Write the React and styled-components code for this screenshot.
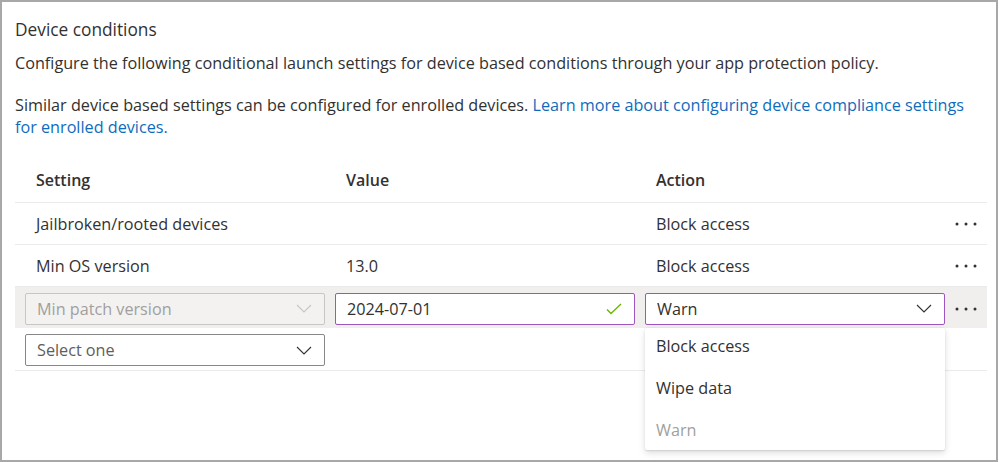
import React from 'react';
import styled, { createGlobalStyle } from 'styled-components';

const GlobalStyle = createGlobalStyle`
  html, body {
    margin: 0;
    padding: 0;
    background: #ffffff;
  }
  body {
    font-family: "Open Sans", "Noto Sans", "Liberation Sans", sans-serif;
    color: #323130;
    -webkit-font-smoothing: antialiased;
  }
`;

const Frame = styled.div`
  box-sizing: border-box;
  width: 998px;
  height: 462px;
  border: 2px solid #a8a8a8;
  padding: 17px 10px 0 13px;
`;

const Title = styled.div`
  font-size: 17.3px;
  line-height: 22px;
  margin-bottom: 11px;
`;

const Para = styled.p`
  margin: 0 0 ${(p) => p.$gap || 0}px;
  font-size: 16.2px;
  line-height: 22px;
  a {
    color: #0f6cbd;
    text-decoration: none;
  }
`;

const Table = styled.div`
  position: relative;
  margin-top: 20px;
  width: 972px;
`;

const Row = styled.div`
  display: grid;
  grid-template-columns: 300px 300px 300px 1fr;
  column-gap: 10px;
  align-items: center;
  box-sizing: border-box;
  height: ${(p) => p.$h || 42}px;
  padding-left: 10px;
  padding-top: ${(p) => p.$pt || 0}px;
  background: ${(p) => (p.$active ? '#f0efee' : 'transparent')};
  border-bottom: ${(p) => (p.$line ? '1px solid #edebe9' : 'none')};
  font-size: 16.2px;
`;

const HeadCell = styled.div`
  font-weight: 600;
  font-size: 16px;
  padding-left: 11px;
`;

const Cell = styled.div`
  padding-left: 11px;
`;

const Field = styled.div`
  box-sizing: border-box;
  height: 32px;
  display: flex;
  align-items: center;
  justify-content: space-between;
  padding: 0 12px 0 11px;
  border: 1px solid ${(p) => p.$border || '#8a8886'};
  border-radius: 2px;
  background: ${(p) => (p.$disabled ? '#f3f2f1' : '#ffffff')};
  color: ${(p) => (p.$disabled ? '#a19f9d' : p.$muted ? '#605e5c' : '#323130')};
  font-size: 16.2px;
`;

const More = styled.div`
  display: flex;
  justify-content: flex-start;
`;

const Menu = styled.div`
  position: absolute;
  left: 630px;
  top: 170px;
  width: 300px;
  box-sizing: border-box;
  padding-bottom: 2px;
  background: #ffffff;
  border-radius: 2px;
  box-shadow: 0 3px 7px rgba(0, 0, 0, 0.13), 0 0.6px 1.8px rgba(0, 0, 0, 0.11);
`;

const Option = styled.div`
  height: 36px;
  margin-bottom: ${(p) => (p.$last ? 0 : 6)}px;
  display: flex;
  align-items: center;
  padding-left: 11px;
  font-size: 16.2px;
  color: ${(p) => (p.$disabled ? '#a19f9d' : '#323130')};
`;

const Chevron = ({ color = '#605e5c' }) => (
  <svg width="16" height="9" viewBox="0 0 16 9" fill="none">
    <path d="M1 1 L8 8 L15 1" stroke={color} strokeWidth="1.1" />
  </svg>
);

const Check = () => (
  <svg width="16" height="12" viewBox="0 0 16 12" fill="none">
    <path d="M1 6.5 L5 10.5 L15 1" stroke="#6bb700" strokeWidth="1.4" />
  </svg>
);

const Dots = () => (
  <svg width="22" height="4" viewBox="0 0 22 4">
    <circle cx="2" cy="2" r="1.5" fill="#323130" />
    <circle cx="11" cy="2" r="1.5" fill="#323130" />
    <circle cx="20" cy="2" r="1.5" fill="#323130" />
  </svg>
);

export default function App() {
  return (
    <>
      <GlobalStyle />
      <Frame>
        <Title>Device conditions</Title>
        <Para $gap={20}>
          Configure the following conditional launch settings for device based conditions through
          your app protection policy.
        </Para>
        <Para>
          Similar device based settings can be configured for enrolled devices.{' '}
          <a href="#">Learn more about configuring device compliance settings for enrolled devices.</a>
        </Para>
        <Table>
          <Row $h={45} $line>
            <HeadCell>Setting</HeadCell>
            <HeadCell>Value</HeadCell>
            <HeadCell>Action</HeadCell>
            <div />
          </Row>
          <Row $line>
            <Cell>Jailbroken/rooted devices</Cell>
            <Cell />
            <Cell>Block access</Cell>
            <More><Dots /></More>
          </Row>
          <Row $line>
            <Cell>Min OS version</Cell>
            <Cell>13.0</Cell>
            <Cell>Block access</Cell>
            <More><Dots /></More>
          </Row>
          <Row $active $h={41} $pt={2}>
            <Field $disabled $border="#c8c6c4">
              Min patch version
              <Chevron color="#c8c6c4" />
            </Field>
            <Field $border="#9f55c0">
              2024-07-01
              <Check />
            </Field>
            <Field $border="#9f55c0">
              Warn
              <Chevron color="#323130" />
            </Field>
            <More><Dots /></More>
          </Row>
          <Row $line $h={43} $pt={2}>
            <Field $muted>
              Select one
              <Chevron color="#323130" />
            </Field>
            <div />
            <div />
            <div />
          </Row>
          <Menu>
            <Option>Block access</Option>
            <Option>Wipe data</Option>
            <Option $disabled $last>Warn</Option>
          </Menu>
        </Table>
      </Frame>
    </>
  );
}
